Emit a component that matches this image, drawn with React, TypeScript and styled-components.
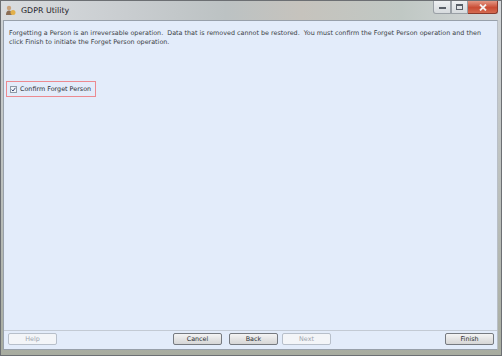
import styled, { createGlobalStyle } from "styled-components";

const GlobalStyle = createGlobalStyle`
  html, body {
    margin: 0;
    padding: 0;
    width: 502px;
    height: 356px;
    overflow: hidden;
  }
  #root {
    width: 502px;
    height: 356px;
  }
`;

const Window = styled.div`
  width: 502px;
  height: 356px;
  box-sizing: border-box;
  display: flex;
  flex-direction: column;
  border: 1px solid #6c6f73;
  background: linear-gradient(to bottom, #cfd3d6, #b9bdb9 60%, #a8aca0);
  font-family: "DejaVu Sans", "Liberation Sans", sans-serif;
`;

const TitleBar = styled.div`
  height: 19px;
  display: flex;
  align-items: center;
  padding-left: 4px;
  background: linear-gradient(
    to right,
    #d9dcdf 0%,
    #c9cdd0 25%,
    #bcc2c3 45%,
    #c6c3bd 60%,
    #c0c8c4 80%,
    #d3d6d8 100%
  );
`;

const AppIcon = styled.svg`
  width: 11px;
  height: 11px;
  margin-right: 5px;
`;

const Title = styled.span`
  font-size: 7.9px;
  color: #1e2228;
  flex: 1;
`;

const Controls = styled.div`
  display: flex;
  align-self: flex-start;
  margin-right: 3px;
`;

const CtrlButton = styled.div<{ $w: number; $close?: boolean }>`
  width: ${(p) => p.$w}px;
  height: 13px;
  box-sizing: border-box;
  display: flex;
  align-items: center;
  justify-content: center;
  border: 1px solid ${(p) => (p.$close ? "#8a3a2c" : "#9aa0a6")};
  border-top: none;
  border-left: ${(p) => (p.$close ? "none" : "1px solid #9aa0a6")};
  background: ${(p) =>
    p.$close
      ? "linear-gradient(to bottom, #e49884, #c94c34 55%, #d56a50)"
      : "linear-gradient(to bottom, #eef0f2, #d6dadd)"};
  &:first-child {
    border-bottom-left-radius: 3px;
  }
  &:last-child {
    border-bottom-right-radius: 3px;
  }
`;

const Content = styled.div`
  flex: 1;
  margin: 0 3px 0 2px;
  display: flex;
  flex-direction: column;
  background: #e3ecfa;
  border: 1px solid #98a0aa;
  border-right: 1px solid #b8bec6;
`;

const Message = styled.p`
  margin: 0;
  padding: 8px 5px 0 5px;
  font-size: 6.4px;
  line-height: 9px;
  color: #3a3e44;
`;

const ConfirmBox = styled.label`
  margin: 34px 0 0 2px;
  align-self: flex-start;
  display: flex;
  align-items: center;
  gap: 3px;
  padding: 3px 4px 3px 3px;
  border: 1px solid #ec8a90;
  font-size: 6.4px;
  color: #2b2f35;
`;

const Check = styled.span`
  width: 7px;
  height: 7px;
  box-sizing: border-box;
  border: 1px solid #8f9aa6;
  background: #f0f3f7;
  display: flex;
  align-items: center;
  justify-content: center;
`;

const Spacer = styled.div`
  flex: 1;
`;

const Footer = styled.div`
  display: flex;
  align-items: center;
  padding: 2px 3px 4px 4px;
  border-top: 1px solid #c3cad4;
`;

const Button = styled.div<{ $disabled?: boolean; $gap?: number }>`
  width: 49px;
  height: 12px;
  margin-left: ${(p) => p.$gap ?? 0}px;
  box-sizing: border-box;
  display: flex;
  align-items: center;
  justify-content: center;
  font-size: 6.4px;
  border-radius: 2px;
  border: 1px solid ${(p) => (p.$disabled ? "#b7bfca" : "#767a80")};
  color: ${(p) => (p.$disabled ? "#9ca4ae" : "#2a2e34")};
  background: ${(p) =>
    p.$disabled
      ? "#f3f5f8"
      : "linear-gradient(to bottom, #f4f4f4, #e4e4e4 50%, #d6d6d6)"};
`;

const BottomEdge = styled.div`
  height: 5px;
`;

function App() {
  return (
    <>
      <GlobalStyle />
      <Window>
        <TitleBar>
          <AppIcon viewBox="0 0 11 11">
            <circle cx="4" cy="3" r="2.2" fill="#c9a27a" />
            <path d="M1 10 Q1 5.5 4 5.5 Q7 5.5 7 10 Z" fill="#8a6d55" />
            <circle cx="8" cy="7.5" r="2.5" fill="#e2b04a" />
          </AppIcon>
          <Title>GDPR Utility</Title>
          <Controls>
            <CtrlButton $w={18}>
              <svg width="7" height="4" viewBox="0 0 7 4">
                <rect x="0" y="2" width="7" height="2" fill="#5a6068" />
              </svg>
            </CtrlButton>
            <CtrlButton $w={17}>
              <svg width="7" height="6" viewBox="0 0 7 6">
                <rect x="0.5" y="0.5" width="6" height="5" fill="none" stroke="#5a6068" />
                <rect x="0.5" y="0.5" width="6" height="1.5" fill="#5a6068" />
              </svg>
            </CtrlButton>
            <CtrlButton $w={30} $close>
              <svg width="8" height="7" viewBox="0 0 8 7">
                <path d="M1 0.5 L7 6.5 M7 0.5 L1 6.5" stroke="#f4f0ee" strokeWidth="1.8" />
              </svg>
            </CtrlButton>
          </Controls>
        </TitleBar>
        <Content>
          <Message>
            Forgetting a Person is an irreversable operation.&nbsp; Data that is
            removed cannot be restored.&nbsp; You must confirm the Forget Person
            operation and then
            <br />
            click Finish to initiate the Forget Person operation.
          </Message>
          <ConfirmBox>
            <Check>
              <svg width="5" height="5" viewBox="0 0 5 5">
                <path d="M0.6 2.6 L2 4 L4.4 0.8" fill="none" stroke="#3a4a78" strokeWidth="1" />
              </svg>
            </Check>
            Confirm Forget Person
          </ConfirmBox>
          <Spacer />
          <Footer>
            <Button $disabled>Help</Button>
            <Button $gap={116}>Cancel</Button>
            <Button $gap={7}>Back</Button>
            <Button $gap={4} $disabled>Next</Button>
            <Spacer />
            <Button>Finish</Button>
          </Footer>
        </Content>
        <BottomEdge />
      </Window>
    </>
  );
}

export default App;
